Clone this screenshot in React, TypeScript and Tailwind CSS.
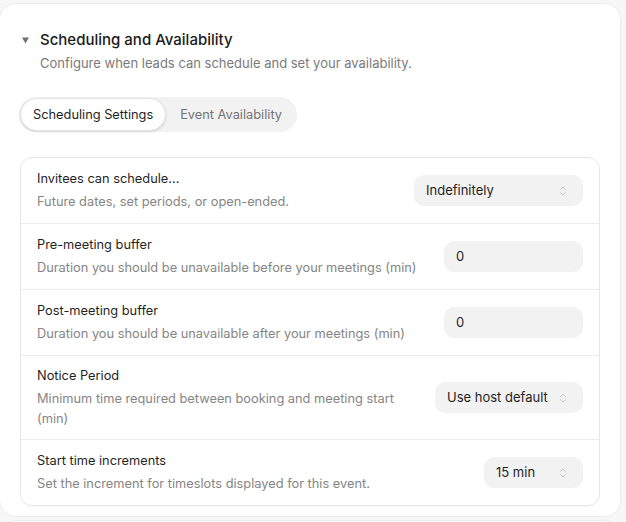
import type { JSX } from 'react';
import { ChevronsUpDown } from 'lucide-react';

type Row = {
  title: string;
  desc: string;
  kind: 'select' | 'input';
  value: string;
  width: string;
  pad: string;
};

const ROWS: Row[] = [
  {
    title: 'Invitees can schedule...',
    desc: 'Future dates, set periods, or open-ended.',
    kind: 'select',
    value: 'Indefinitely',
    width: 'w-[169px]',
    pad: 'py-[11px]',
  },
  {
    title: 'Pre-meeting buffer',
    desc: 'Duration you should be unavailable before your meetings (min)',
    kind: 'input',
    value: '0',
    width: 'w-[139px]',
    pad: 'py-[11px]',
  },
  {
    title: 'Post-meeting buffer',
    desc: 'Duration you should be unavailable after your meetings (min)',
    kind: 'input',
    value: '0',
    width: 'w-[139px]',
    pad: 'py-[11px]',
  },
  {
    title: 'Notice Period',
    desc: 'Minimum time required between booking and meeting start (min)',
    kind: 'select',
    value: 'Use host default',
    width: 'w-[148px]',
    pad: 'py-[10px]',
  },
  {
    title: 'Start time increments',
    desc: 'Set the increment for timeslots displayed for this event.',
    kind: 'select',
    value: '15 min',
    width: 'w-[99px]',
    pad: 'py-[11px]',
  },
];

function Control({ row }: { row: Row }): JSX.Element {
  if (row.kind === 'input') {
    return (
      <div
        className={`${row.width} flex h-[31px] shrink-0 items-center rounded-[10px] bg-[#f2f2f2] pl-3 text-[13px] text-[#1f1f1f]`}
      >
        {row.value}
      </div>
    );
  }
  return (
    <div
      className={`${row.width} flex h-[31px] shrink-0 items-center justify-between rounded-[10px] bg-[#f2f2f2] pl-3 pr-[14px] text-[13px] text-[#1f1f1f]`}
    >
      <span>{row.value}</span>
      <ChevronsUpDown className="h-3 w-3 text-[#b8b8b8]" strokeWidth={1.5} />
    </div>
  );
}

export default function App(): JSX.Element {
  return (
    <div
      className="min-h-[522px] overflow-hidden bg-[#f7f7f7] pt-[3px]"
      style={{ fontFamily: 'Inter, "Noto Sans", sans-serif' }}
    >
      <div className="-ml-px w-[622px] rounded-2xl border border-[#ebebeb] bg-white px-5 pb-[10px] pt-[25px]">
        {/* Header */}
        <div className="flex items-start gap-3">
          <svg width="7" height="7" viewBox="0 0 7 7" className="ml-[2px] mt-[8px] shrink-0">
            <polygon points="0,0.5 7,0.5 3.5,6.5" fill="#737373" />
          </svg>
          <div className="-ml-px">
            <h2 className="text-[15px] leading-[22px] font-medium text-[#1a1a1a]">
              Scheduling and Availability
            </h2>
            <p className="mt-0.5 text-[13px] leading-5 text-[#7a7a7a]">
              Configure when leads can schedule and set your availability.
            </p>
          </div>
        </div>

        {/* Tabs */}
        <div className="mt-6 -ml-px inline-flex h-[35px] items-center rounded-full bg-[#f2f2f2] p-px">
          <div className="flex h-[33px] items-center rounded-full border border-[#e4e4e4] bg-white px-[12px] text-[12.8px] text-[#1f1f1f] shadow-sm">
            Scheduling Settings
          </div>
          <div className="flex h-[33px] items-center px-[14px] text-[12.8px] text-[#737373]">
            Event Availability
          </div>
        </div>

        {/* Settings table */}
        <div className="mt-[25px] rounded-xl border border-[#e6e6e6] shadow-[0_1px_1px_rgba(0,0,0,0.03)]">
          {ROWS.map((row, i) => (
            <div
              key={row.title}
              className={`flex items-center justify-between gap-4 px-4 ${row.pad} ${i > 0 ? 'border-t border-[#ebebeb]' : ''}`}
            >
              <div className="min-w-0">
                <div className="text-[12.8px] leading-5 text-[#1f1f1f]">{row.title}</div>
                <div className="mt-[3px] text-[12.8px] leading-5 text-[#858585]">{row.desc}</div>
              </div>
              <Control row={row} />
            </div>
          ))}
        </div>
      </div>
      <div className="-ml-px mt-[3px] h-6 w-[622px] rounded-t-2xl border border-[#ebebeb] bg-white" />
    </div>
  );
}
